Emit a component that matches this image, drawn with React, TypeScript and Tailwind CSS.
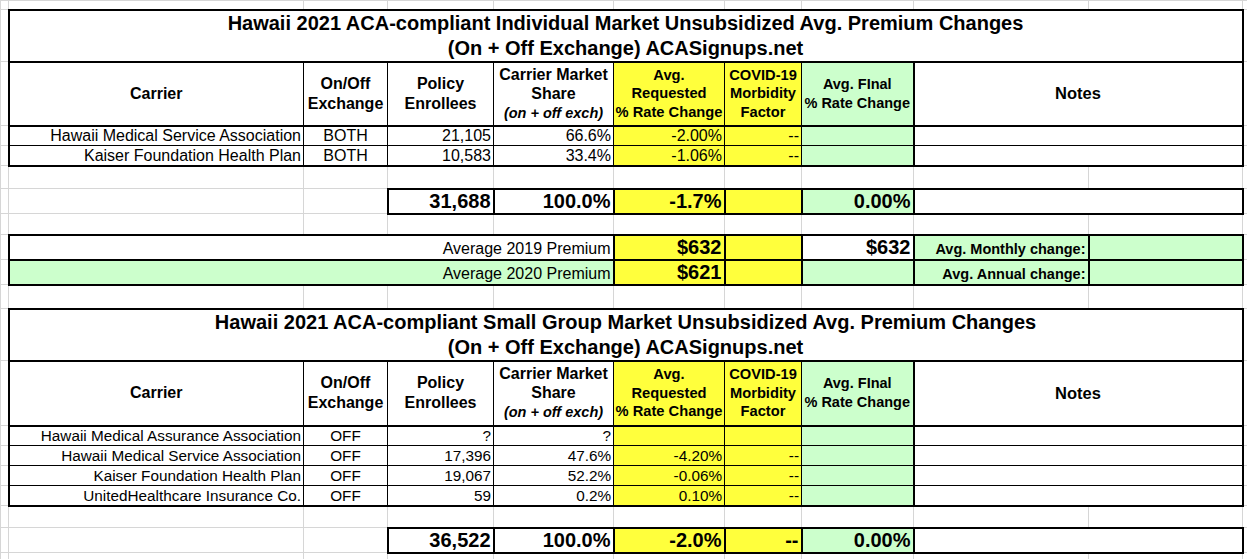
import React from "react";

const Y = "bg-[#ffff3c]";
const GR = "bg-[#ccffcc]";
const gray = "border border-[#d6d6d6]";

const colWidths = [8, 295, 84, 106, 120, 111, 77, 112, 175, 154, 5];

function Blank({ h }: { h: string }) {
  return (
    <tr className={h}>
      {colWidths.map((_, i) => (
        <td key={i} className={gray}></td>
      ))}
    </tr>
  );
}

function Title({ l1, l2, h }: { l1: string; l2: string; h: string }) {
  return (
    <tr className={h}>
      <td className={gray}></td>
      <td colSpan={9} className="border-2 border-black text-center align-middle text-[20px] font-bold leading-[25px]">
        <div>{l1}</div>
        <div>{l2}</div>
      </td>
      <td className={gray}></td>
    </tr>
  );
}

function Header({ h }: { h: string }) {
  const base = "border border-black border-y-2 text-center align-middle font-bold";
  return (
    <tr className={h}>
      <td className={gray}></td>
      <td className={`${base} border-l-2 text-[16px]`}>Carrier</td>
      <td className={`${base} text-[16px] leading-[20px]`}>
        On/Off
        <br />
        Exchange
      </td>
      <td className={`${base} text-[16px] leading-[20px]`}>
        Policy
        <br />
        Enrollees
      </td>
      <td className={`${base} text-[16px] leading-[19px]`}>
        Carrier Market
        <br />
        Share
        <br />
        <span className="italic text-[14.5px]">(on + off exch)</span>
      </td>
      <td className={`${base} ${Y} text-[14.7px] leading-[18.5px]`}>
        Avg.
        <br />
        Requested
        <br />% Rate Change
      </td>
      <td className={`${base} ${Y} text-[14.7px] leading-[18.5px]`}>
        COVID-19
        <br />
        Morbidity
        <br />
        Factor
      </td>
      <td className={`${base} ${GR} text-[14.5px] leading-[19px]`}>
        Avg. FInal
        <br />% Rate Change
      </td>
      <td colSpan={2} className={`${base} border-x-2 text-[16.5px]`}>
        Notes
      </td>
      <td className={gray}></td>
    </tr>
  );
}

type Row = {
  carrier: string;
  ex: string;
  enr: string;
  share: string;
  req: string;
  covid: string;
};

function DataRow({ r, last, size }: { r: Row; last: boolean; size: string }) {
  const b = `border border-black ${last ? "border-b-2" : ""} align-bottom leading-[18px] ${size}`;
  return (
    <tr className="h-[20px]">
      <td className={gray}></td>
      <td className={`${b} border-l-2 text-right pr-[2px]`}>{r.carrier}</td>
      <td className={`${b} text-center`}>{r.ex}</td>
      <td className={`${b} text-right pr-[2px]`}>{r.enr}</td>
      <td className={`${b} text-right pr-[2px]`}>{r.share}</td>
      <td className={`${b} ${Y} text-right pr-[2px]`}>{r.req}</td>
      <td className={`${b} ${Y} text-right pr-[2px]`}>{r.covid}</td>
      <td className={`${b} ${GR} border-r-2`}></td>
      <td colSpan={2} className={`${b} border-r-2`}></td>
      <td className={gray}></td>
    </tr>
  );
}

function TotalRow({ enr, share, req, covid, fin }: { enr: string; share: string; req: string; covid: string; fin: string }) {
  const b = "border-2 border-black text-right pr-[2px] align-bottom text-[20px] font-bold leading-[23px]";
  return (
    <tr className="h-[25px]">
      <td className={gray}></td>
      <td className={gray}></td>
      <td className={gray}></td>
      <td className={b}>{enr}</td>
      <td className={b}>{share}</td>
      <td className={`${b} ${Y}`}>{req}</td>
      <td className={`${b} ${Y}`}>{covid}</td>
      <td className={`${b} ${GR}`}>{fin}</td>
      <td colSpan={2} className={b}></td>
      <td className={gray}></td>
    </tr>
  );
}

const t1: Row[] = [
  { carrier: "Hawaii Medical Service Association", ex: "BOTH", enr: "21,105", share: "66.6%", req: "-2.00%", covid: "--" },
  { carrier: "Kaiser Foundation Health Plan", ex: "BOTH", enr: "10,583", share: "33.4%", req: "-1.06%", covid: "--" },
];

const t2: Row[] = [
  { carrier: "Hawaii Medical Assurance Association", ex: "OFF", enr: "?", share: "?", req: "", covid: "" },
  { carrier: "Hawaii Medical Service Association", ex: "OFF", enr: "17,396", share: "47.6%", req: "-4.20%", covid: "--" },
  { carrier: "Kaiser Foundation Health Plan", ex: "OFF", enr: "19,067", share: "52.2%", req: "-0.06%", covid: "--" },
  { carrier: "UnitedHealthcare Insurance Co.", ex: "OFF", enr: "59", share: "0.2%", req: "0.10%", covid: "--" },
];

export default function App() {
  const avgL = "border-2 border-black text-right pr-[2px] align-bottom text-[16px] leading-[20px]";
  const avgB = "border-2 border-black text-right pr-[2px] align-bottom text-[20px] font-bold leading-[23px]";
  const avgS = "border-2 border-black text-right pr-[2px] align-bottom text-[14.5px] font-bold leading-[20px]";
  return (
    <div className="w-[1247px] h-[559px] overflow-hidden bg-white text-black font-['Liberation_Sans',Arial,sans-serif]">
      <table className="table-fixed border-collapse w-[1247px]">
        <colgroup>
          {colWidths.map((w, i) => (
            <col key={i} style={{ width: w }} />
          ))}
        </colgroup>
        <tbody>
          <Blank h="h-[9px]" />
          <Title
            h="h-[52px]"
            l1="Hawaii 2021 ACA-compliant Individual Market Unsubsidized Avg. Premium Changes"
            l2="(On + Off Exchange) ACASignups.net"
          />
          <Header h="h-[64px]" />
          {t1.map((r, i) => (
            <DataRow key={i} r={r} last={i === t1.length - 1} size="text-[16px]" />
          ))}
          <Blank h="h-[23px]" />
          <TotalRow enr="31,688" share="100.0%" req="-1.7%" covid="" fin="0.00%" />
          <Blank h="h-[21px]" />
          <tr className="h-[25px]">
            <td className={gray}></td>
            <td colSpan={4} className={avgL}>Average 2019 Premium</td>
            <td className={`${avgB} ${Y}`}>$632</td>
            <td className={`${avgB} ${Y}`}></td>
            <td className={avgB}>$632</td>
            <td className={`${avgS} ${GR}`}>Avg. Monthly change:</td>
            <td className={`${avgS} ${GR}`}></td>
            <td className={gray}></td>
          </tr>
          <tr className="h-[24px]">
            <td className={gray}></td>
            <td colSpan={4} className={`${avgL} ${GR}`}>Average 2020 Premium</td>
            <td className={`${avgB} ${Y}`}>$621</td>
            <td className={`${avgB} ${Y}`}></td>
            <td className={`${avgB} ${GR}`}></td>
            <td className={`${avgS} ${GR}`}>Avg. Annual change:</td>
            <td className={`${avgS} ${GR}`}></td>
            <td className={gray}></td>
          </tr>
          <Blank h="h-[24px]" />
          <Title
            h="h-[51px]"
            l1="Hawaii 2021 ACA-compliant Small Group Market Unsubsidized Avg. Premium Changes"
            l2="(On + Off Exchange) ACASignups.net"
          />
          <Header h="h-[65px]" />
          {t2.map((r, i) => (
            <DataRow key={i} r={r} last={i === t2.length - 1} size="text-[15.3px]" />
          ))}
          <Blank h="h-[22px]" />
          <TotalRow enr="36,522" share="100.0%" req="-2.0%" covid="--" fin="0.00%" />
          <Blank h="h-[9px]" />
        </tbody>
      </table>
    </div>
  );
}
